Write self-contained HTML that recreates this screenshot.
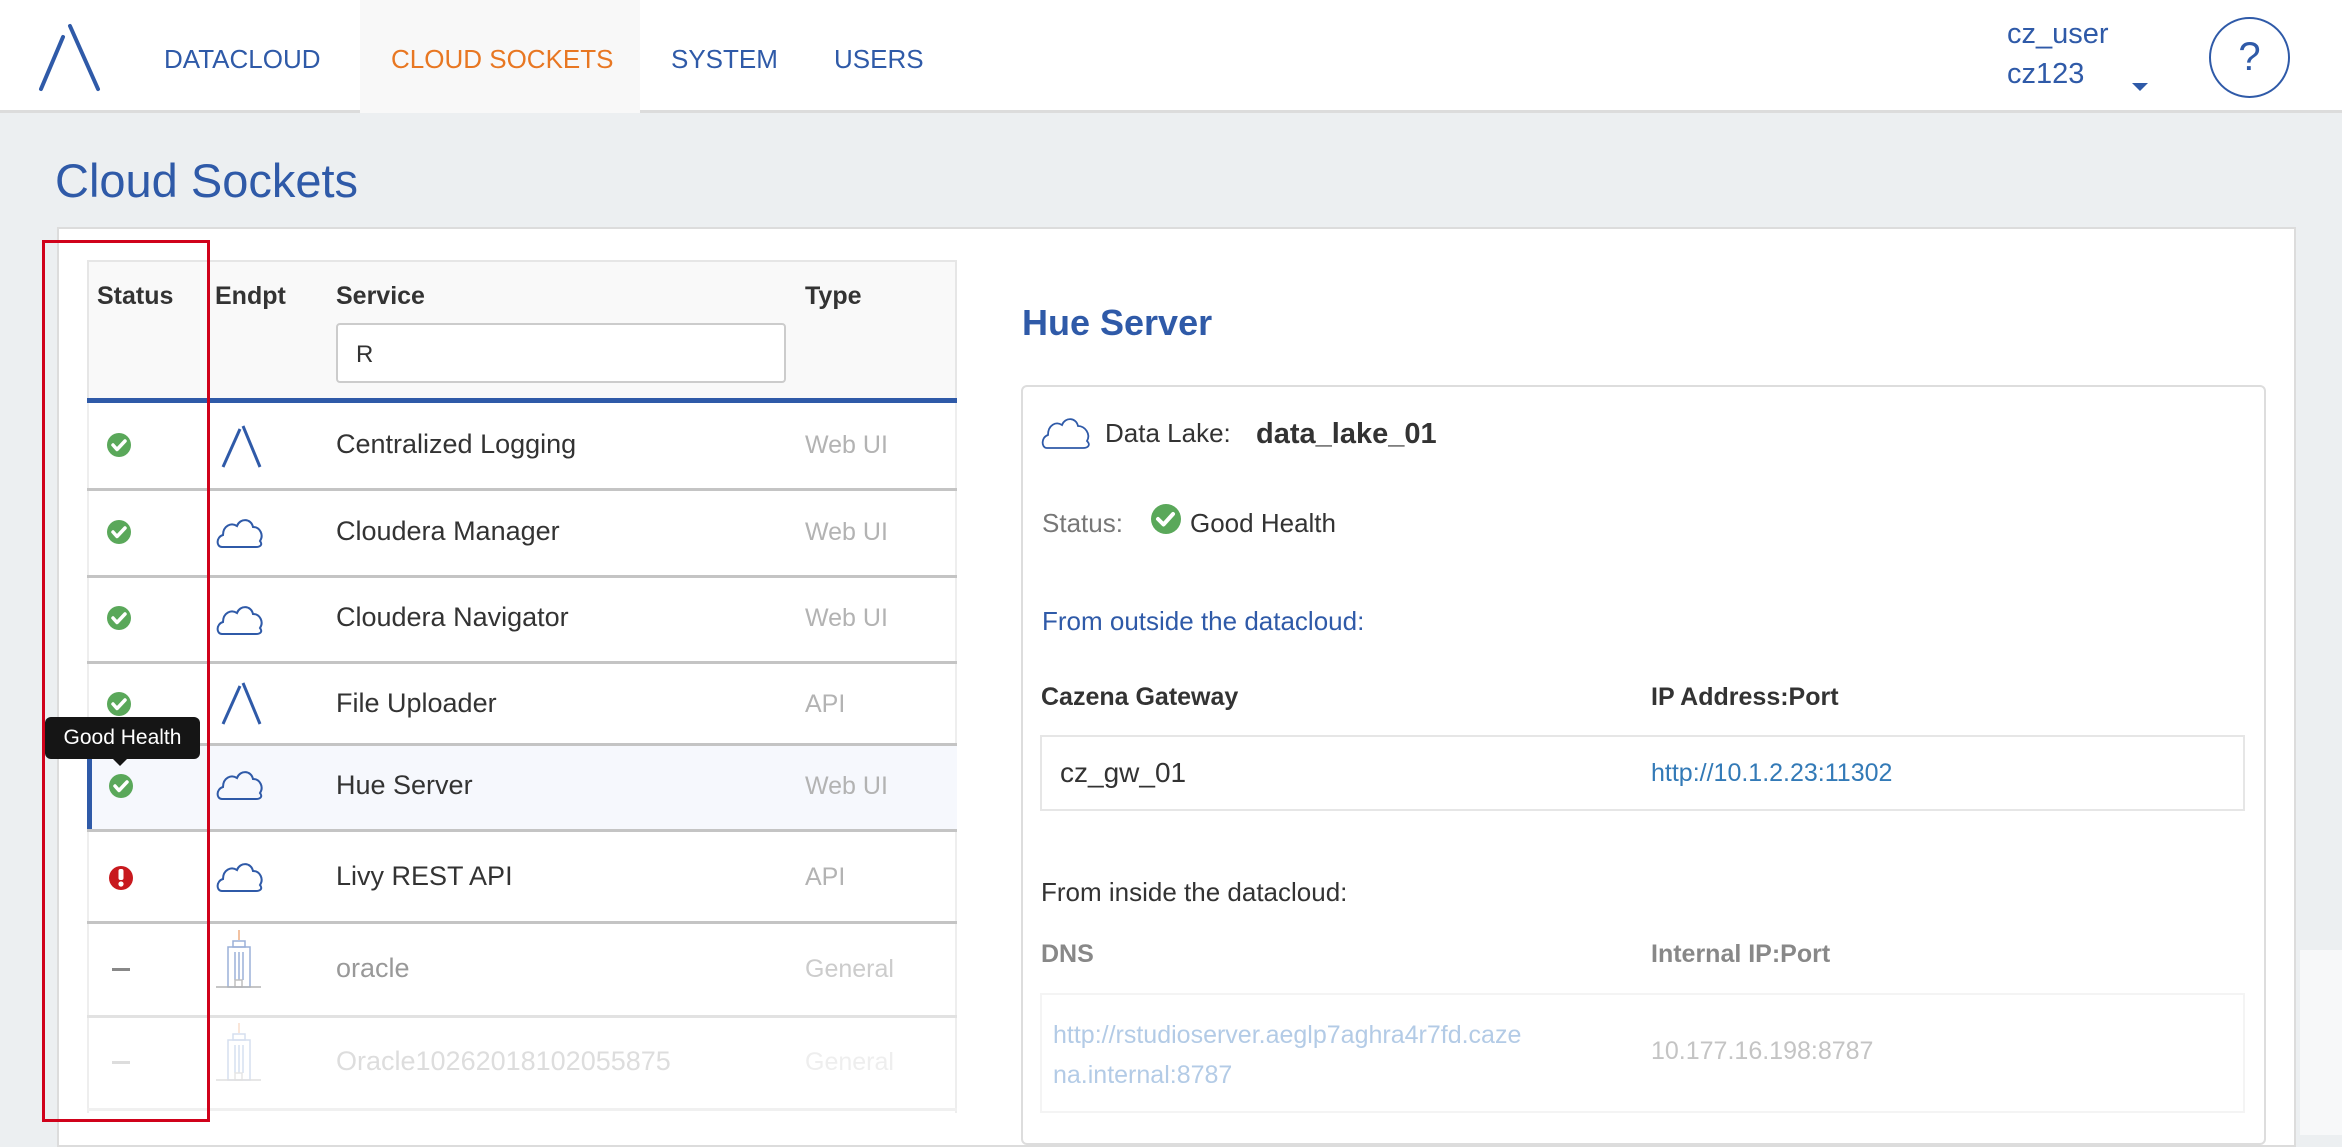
<!DOCTYPE html>
<html><head><meta charset="utf-8"><style>
*{margin:0;padding:0;box-sizing:border-box}
body{width:2342px;height:1135px;overflow:hidden;background:#eceff1;font-family:"Liberation Sans",sans-serif;position:relative;color:#333}
.a{position:absolute;white-space:nowrap}
.hdr{position:absolute;left:0;top:0;width:2342px;height:113px;background:#fff;border-bottom:3px solid #dcdcdc}
.nav{font-size:26px;color:#2f5aa8;top:44px}
.th{font-size:25px;font-weight:bold;color:#333;top:282px}
.svc{font-size:27px;color:#333}
.typ{font-size:25px;color:#b3b3b3}
.sep{position:absolute;left:87px;width:870px;height:3px;background:#c4c4c4}
</style></head><body>
<div class="hdr"></div>
<svg class="a" style="left:0;top:0" width="120" height="113"><line x1="41" y1="89" x2="63" y2="37" stroke="#2f5aa8" stroke-width="4" stroke-linecap="round"/><line x1="70" y1="26" x2="98" y2="89" stroke="#2f5aa8" stroke-width="4" stroke-linecap="round"/></svg>
<div class="a" style="left:360px;top:0;width:280px;height:113px;background:#f8f8f8"></div>
<div class="a nav" style="left:164px">DATACLOUD</div>
<div class="a nav" style="left:391px;color:#e87722">CLOUD SOCKETS</div>
<div class="a nav" style="left:671px">SYSTEM</div>
<div class="a nav" style="left:834px">USERS</div>
<div class="a" style="left:2007px;top:18px;font-size:29px;color:#2f5aa8">cz_user</div>
<div class="a" style="left:2007px;top:58px;font-size:29px;color:#2f5aa8">cz123</div>
<div class="a" style="left:2132px;top:83px;width:0;height:0;border-left:8px solid transparent;border-right:8px solid transparent;border-top:8px solid #2f5aa8"></div>
<div class="a" style="left:2209px;top:17px;width:81px;height:81px;border:2px solid #2f5aa8;border-radius:50%;text-align:center;line-height:76px;font-size:40px;color:#2f5aa8">?</div>

<div class="a" style="left:55px;top:153px;font-size:47px;color:#2f5aa8">Cloud Sockets</div>
<div class="a" style="left:57px;top:227px;width:2239px;height:920px;background:#fff;border:2px solid #dcdcdc"></div>

<div class="a" style="left:87px;top:260px;width:870px;height:140px;background:#f9f9f9;border:2px solid #e6e6e6;border-bottom:none"></div>
<div class="a" style="left:87px;top:398px;width:870px;height:5px;background:#2f5aa8"></div>
<div class="a th" style="left:97px">Status</div>
<div class="a th" style="left:215px">Endpt</div>
<div class="a th" style="left:336px">Service</div>
<div class="a th" style="left:805px">Type</div>
<div class="a" style="left:336px;top:323px;width:450px;height:60px;background:#fff;border:2px solid #ccc;border-radius:4px;font-size:24px;padding:16px 0 0 18px;color:#333">R</div>
<div class="a" style="left:87px;top:403px;width:2px;height:710px;background:#eee"></div>
<div class="a" style="left:955px;top:403px;width:2px;height:710px;background:#eee"></div>

<div class="a" style="left:87px;top:745px;width:870px;height:86px;background:#f6f8fd"></div>
<div class="a" style="left:87px;top:745px;width:5px;height:86px;background:#2f5aa8"></div>

<div class="sep" style="top:488px"></div>
<div class="sep" style="top:575px"></div>
<div class="sep" style="top:661px"></div>
<div class="sep" style="top:743px"></div>
<div class="sep" style="top:829px"></div>
<div class="sep" style="top:921px"></div>
<div class="sep" style="top:1015px;background:#e2e2e2"></div>
<div class="sep" style="top:1108px;background:#f0f0f0"></div>

<svg class="a" style="left:0;top:0" width="960" height="1135">
<defs>
<g id="ok"><circle r="12" fill="#5aa85a"/><path d="M-6 0 L-2 4.5 L6 -4" stroke="#fff" stroke-width="3.5" fill="none" stroke-linecap="round" stroke-linejoin="round"/></g>
<g id="lam"><line x1="1" y1="41" x2="18" y2="3" stroke="#2f5aa8" stroke-width="3"/><line x1="21" y1="0" x2="38" y2="41" stroke="#2f5aa8" stroke-width="3"/></g>
<path id="cl" d="M6 31 C0 31 0 21 7 19 C7 10 15 6 21 10 C24 2 35 2 37 11 C44 11 48 19 44 25 C47 29 44 31 40 31 Z" fill="none" stroke="#2f5aa8" stroke-width="2"/>
<g id="bld" fill="none" stroke-width="1.5"><line x1="23" y1="0" x2="23" y2="10" stroke="#e8925a"/><rect x="17" y="11" width="12" height="6" stroke="#7a96cc"/><rect x="12" y="17" width="22" height="40" stroke="#7a96cc"/><line x1="19" y1="22" x2="19" y2="50" stroke="#7a96cc"/><line x1="23" y1="22" x2="23" y2="50" stroke="#7a96cc"/><line x1="27" y1="22" x2="27" y2="50" stroke="#7a96cc"/><rect x="19" y="50" width="7" height="7" stroke="#aaa"/><line x1="0" y1="57" x2="45" y2="57" stroke="#999"/></g>
</defs>
<use href="#ok" x="119" y="445"/>
<use href="#ok" x="119" y="532"/>
<use href="#ok" x="119" y="618"/>
<use href="#ok" x="119" y="704"/>
<use href="#ok" x="121" y="786"/>
<circle cx="121" cy="878" r="12" fill="#c8191e"/><rect x="118.5" y="869" width="5" height="11" rx="2" fill="#fff"/><circle cx="121" cy="884" r="2.6" fill="#fff"/>
<rect x="112" y="968" width="18" height="3" fill="#888"/>
<rect x="112" y="1061" width="18" height="3" fill="#ddd"/>
<use href="#lam" x="222" y="426"/>
<use href="#lam" x="222" y="683"/>
<use href="#cl" x="216" y="516"/>
<use href="#cl" x="216" y="603"/>
<use href="#cl" x="216" y="768"/>
<use href="#cl" x="216" y="860"/>
<g opacity="0.75"><use href="#bld" x="216" y="930"/></g>
<g opacity="0.3"><use href="#bld" x="216" y="1023"/></g>
</svg>

<div class="a svc" style="left:336px;top:429px">Centralized Logging</div>
<div class="a svc" style="left:336px;top:516px">Cloudera Manager</div>
<div class="a svc" style="left:336px;top:602px">Cloudera Navigator</div>
<div class="a svc" style="left:336px;top:688px">File Uploader</div>
<div class="a svc" style="left:336px;top:770px">Hue Server</div>
<div class="a svc" style="left:336px;top:861px">Livy REST API</div>
<div class="a svc" style="left:336px;top:953px;color:#999">oracle</div>
<div class="a svc" style="left:336px;top:1046px;color:#ddd">Oracle10262018102055875</div>
<div class="a typ" style="left:805px;top:431px">Web UI</div>
<div class="a typ" style="left:805px;top:518px">Web UI</div>
<div class="a typ" style="left:805px;top:604px">Web UI</div>
<div class="a typ" style="left:805px;top:690px">API</div>
<div class="a typ" style="left:805px;top:772px">Web UI</div>
<div class="a typ" style="left:805px;top:863px">API</div>
<div class="a typ" style="left:805px;top:955px;color:#ccc">General</div>
<div class="a typ" style="left:805px;top:1048px;color:#eee">General</div>

<div class="a" style="left:45px;top:717px;width:155px;height:42px;background:#151515;border-radius:6px;color:#fff;font-size:21px;line-height:42px;text-align:center">Good Health</div>
<div class="a" style="left:120px;top:758px;width:0;height:0;border-left:8px solid transparent;border-right:8px solid transparent;border-top:8px solid #151515;margin-left:-8px"></div>

<div class="a" style="left:42px;top:240px;width:168px;height:882px;border:3px solid #d0021b"></div>

<div class="a" style="left:1022px;top:302px;font-size:36px;font-weight:bold;color:#2f5aa8">Hue Server</div>
<div class="a" style="left:1021px;top:385px;width:1245px;height:760px;border:2px solid #ddd;border-radius:6px"></div>
<svg class="a" style="left:1041px;top:415px" width="52" height="36"><path d="M6 33 C0 33 0 22 7 20 C7 10 15 6 21 10 C24 2 35 2 37 11 C44 11 50 19 46 26 C50 30 47 33 42 33 Z" fill="none" stroke="#2f5aa8" stroke-width="1.8"/></svg>
<div class="a" style="left:1105px;top:418px;font-size:26px;color:#333">Data Lake:</div>
<div class="a" style="left:1256px;top:418px;font-size:29px;font-weight:bold;color:#333">data_lake_01</div>
<div class="a" style="left:1042px;top:508px;font-size:26px;color:#777">Status:</div>
<svg class="a" style="left:1150px;top:503px" width="32" height="32"><circle cx="16" cy="16" r="15" fill="#5aa85a"/><path d="M8 16 L13.5 21.5 L23 11" stroke="#fff" stroke-width="4" fill="none" stroke-linecap="round" stroke-linejoin="round"/></svg>
<div class="a" style="left:1190px;top:508px;font-size:26px;color:#333">Good Health</div>
<div class="a" style="left:1042px;top:606px;font-size:26px;color:#2f5aa8">From outside the datacloud:</div>
<div class="a" style="left:1041px;top:683px;font-size:25px;font-weight:bold;color:#333">Cazena Gateway</div>
<div class="a" style="left:1651px;top:683px;font-size:25px;font-weight:bold;color:#333">IP Address:Port</div>
<div class="a" style="left:1040px;top:735px;width:1205px;height:76px;border:2px solid #e6e6e6"></div>
<div class="a" style="left:1060px;top:757px;font-size:28px;color:#333">cz_gw_01</div>
<div class="a" style="left:1651px;top:759px;font-size:25px;color:#337ab7">http://10.1.2.23:11302</div>
<div class="a" style="left:1041px;top:877px;font-size:26px;color:#333">From inside the datacloud:</div>
<div class="a" style="left:1041px;top:940px;font-size:25px;font-weight:bold;color:#888">DNS</div>
<div class="a" style="left:1651px;top:940px;font-size:25px;font-weight:bold;color:#888">Internal IP:Port</div>
<div class="a" style="left:1040px;top:993px;width:1205px;height:120px;border:2px solid #f4f4f4"></div>
<div class="a" style="left:1053px;top:1015px;font-size:25px;color:#b3cbe6;line-height:40px">http://rstudioserver.aeglp7aghra4r7fd.caze<br>na.internal:8787</div>
<div class="a" style="left:1651px;top:1037px;font-size:25px;color:#c4c4c4">10.177.16.198:8787</div>
<div class="a" style="left:2300px;top:950px;width:42px;height:185px;background:#f7f8f9"></div>
</body></html>
